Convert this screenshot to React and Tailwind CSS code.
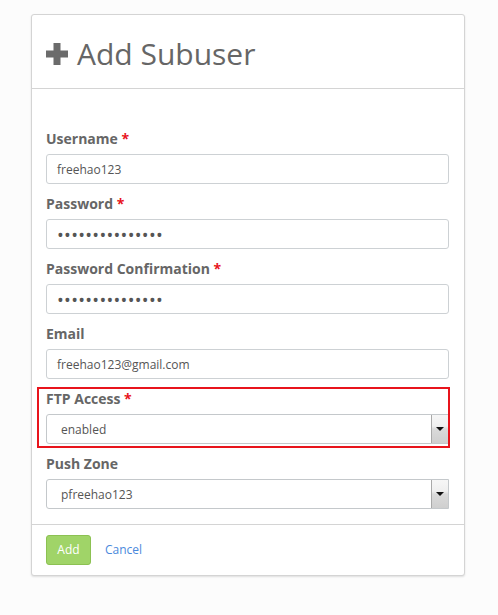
import React from "react";

const font = { fontFamily: '"Open Sans", "Liberation Sans", sans-serif' };

function Label({ text, required }) {
  return (
    <div className="h-[20px] leading-[20px] pt-[1px] text-[14px] font-bold text-[#666666] mb-[6px]">
      {text}
      {required && <span className="text-[#e8141c]"> *</span>}
    </div>
  );
}

function TextBox({ value, password }) {
  return (
    <div className="h-[30px] w-full border border-[#cdd1d4] rounded-[3px] bg-white flex items-center pl-[10px]">
      {password ? (
        <span className="text-[18px] text-[#555555] tracking-[0.3px] leading-none pt-[1px]">•••••••••••••••</span>
      ) : (
        <span className="text-[12px] text-[#555555] pt-[1px]">{value}</span>
      )}
    </div>
  );
}

function SelectBox({ value }) {
  return (
    <div className="h-[30px] w-full border border-[#c4c8cb] rounded-l-[3px] bg-white flex items-stretch">
      <div className="flex-1 flex items-center pl-[14px] pt-[1px] text-[12px] text-[#555555]">{value}</div>
      <div className="w-[17px] border-l border-[#a9a9a9] bg-[linear-gradient(#f6f6f6_0%,#efefef_40%,#dadada_50%,#cfcfcf_100%)] flex items-start justify-center pt-[12px]">
        <svg width="8" height="4" viewBox="0 0 8 4">
          <path d="M0 0 L8 0 L4 4 Z" fill="#111" />
        </svg>
      </div>
    </div>
  );
}

export default function App() {
  return (
    <div className="min-h-screen bg-[#fcfcfc] pt-[14px] pl-[31px]" style={font}>
      <div className="w-[434px] bg-white border border-[#d4d4d4] rounded-[3px] shadow-[0_1px_2px_rgba(0,0,0,0.12)]">
        <div className="h-[74px] pt-[4px] px-[14px] border-b border-[#d4d4d4] flex items-center gap-[9px]">
          <svg width="22" height="22" viewBox="0 0 22 22">
            <path d="M7.5 0 H14.5 V7.5 H22 V14.5 H14.5 V22 H7.5 V14.5 H0 V7.5 H7.5 Z" fill="#6b6b6b" />
          </svg>
          <span className="text-[30px] leading-[40px] text-[#666666]">Add Subuser</span>
        </div>
        <div className="pt-[39px] pb-[15px] pl-[14px] pr-[15px] flex flex-col gap-[9px]">
          <div>
            <Label text="Username" required />
            <TextBox value="freehao123" />
          </div>
          <div>
            <Label text="Password" required />
            <TextBox password />
          </div>
          <div>
            <Label text="Password Confirmation" required />
            <TextBox password />
          </div>
          <div>
            <Label text="Email" />
            <TextBox value="freehao123@gmail.com" />
          </div>
          <div className="relative">
            <Label text="FTP Access" required />
            <SelectBox value="enabled" />
            <div className="absolute -left-[9px] -right-[1px] -top-[1px] -bottom-[4px] border-2 border-[#e8141c] pointer-events-none" />
          </div>
          <div>
            <Label text="Push Zone" />
            <SelectBox value="pfreehao123" />
          </div>
        </div>
        <div className="border-t border-[#d4d4d4] pt-[10px] pb-[10px] px-[14px] flex items-center gap-[14px]">
          <button className="h-[30px] w-[45px] rounded-[3px] bg-[#a0d468] border border-[#8cc152] text-white text-[12px]">
            Add
          </button>
          <span className="text-[12px] text-[#4a89dc]">Cancel</span>
        </div>
      </div>
    </div>
  );
}
